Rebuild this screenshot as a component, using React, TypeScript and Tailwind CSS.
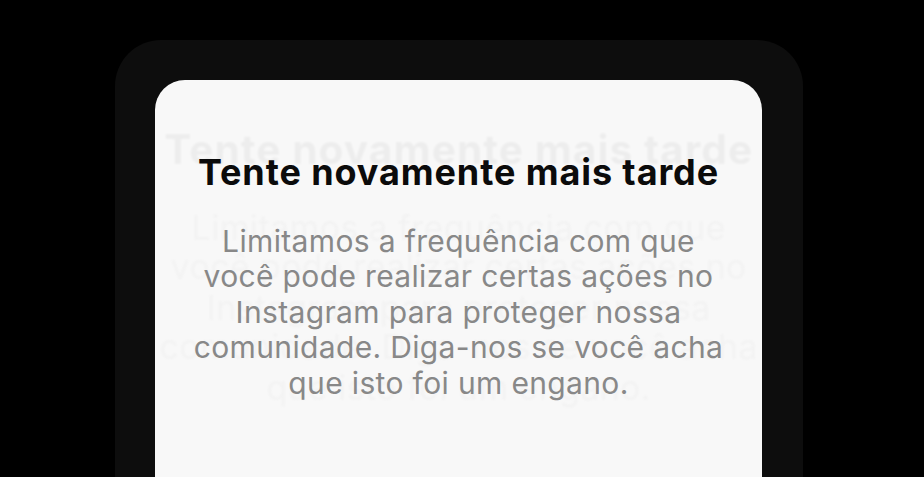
const title = "Tente novamente mais tarde";
const lines = [
  "Limitamos a frequência com que",
  "você pode realizar certas ações no",
  "Instagram para proteger nossa",
  "comunidade. Diga-nos se você acha",
  "que isto foi um engano.",
];

function Message({ ghost }: { ghost?: boolean }) {
  return (
    <div
      className={
        ghost
          ? "col-start-1 row-start-1 flex origin-[50%_268px] scale-[1.13] flex-col items-center pt-[70px] opacity-[0.045] blur-[0.8px]"
          : "col-start-1 row-start-1 flex flex-col items-center pt-[70px]"
      }
    >
      <h1 className="whitespace-nowrap text-[36px] font-bold leading-[44px] tracking-[0.9px] text-[#0b0b0b]">
        {title}
      </h1>
      <p className="mt-[30px] flex flex-col items-center text-[30px] leading-[35.4px] tracking-[0.35px] text-[#888888]">
        {lines.map((l) => (
          <span key={l} className="whitespace-nowrap">
            {l}
          </span>
        ))}
      </p>
    </div>
  );
}

export default function App() {
  return (
    <div
      className="h-[477px] w-[924px] overflow-hidden bg-black pl-[115px] pt-[40px]"
      style={{ fontFamily: "Inter, 'Noto Sans', sans-serif" }}
    >
      <div className="h-[600px] w-[688px] rounded-[46px] bg-[#0d0d0d] px-[40px] pt-[40px]">
        <div className="grid h-[600px] w-[607px] content-start justify-items-center overflow-hidden rounded-[30px] bg-[#f8f8f8]">
          <Message ghost />
          <Message />
        </div>
      </div>
    </div>
  );
}
